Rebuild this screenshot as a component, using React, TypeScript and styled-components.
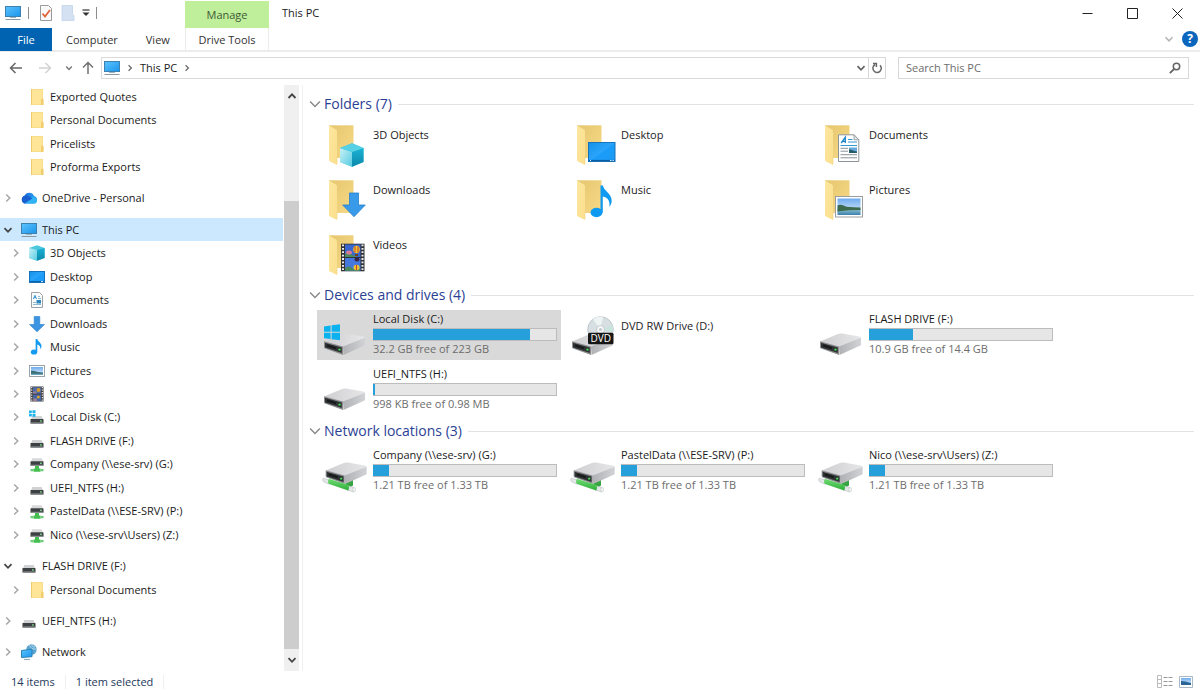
import React from "react";
import styled, { createGlobalStyle } from "styled-components";

const GlobalStyle = createGlobalStyle`
  * { box-sizing: border-box; }
  body {
    margin: 0;
    background: #fff;
    color: #1b1b1b;
    font-family: "Open Sans", "Noto Sans", sans-serif;
    font-size: 11px;
    line-height: 16px;
  }
  button { font: inherit; color: inherit; background: none; border: 0; padding: 0; }
  svg { display: block; flex: none; }
`;

/* ---------- Icons ---------- */

type Dir = "up" | "down" | "right";

const Chevron = ({ dir, color = "#555", size = 10, stroke = 1.5 }: { dir: Dir; color?: string; size?: number; stroke?: number }) => {
  const d = { up: "M1.5 7 5 3.4 8.5 7", down: "M1.5 3.2 5 6.8 8.5 3.2", right: "M3.2 1.5 6.8 5 3.2 8.5" }[dir];
  return (
    <svg width={size} height={size} viewBox="0 0 10 10" fill="none" stroke={color} strokeWidth={stroke}>
      <path d={d} />
    </svg>
  );
};

const HiddenDefs = styled.svg`
  position: absolute;
`;

const Gradients = () => (
  <HiddenDefs width="0" height="0" aria-hidden="true">
    <defs>
      <linearGradient id="screen" x1="0" y1="0" x2="1" y2="1">
        <stop offset="0" stopColor="#5cc3ff" /><stop offset="1" stopColor="#1b95ea" />
      </linearGradient>
      <linearGradient id="desk" x1="0" y1="0" x2="1" y2="1">
        <stop offset="0" stopColor="#1591ea" /><stop offset="0.5" stopColor="#2ba5fb" /><stop offset="0.52" stopColor="#1a9cf8" /><stop offset="1" stopColor="#1c9bf6" />
      </linearGradient>
      <linearGradient id="flap" x1="0" y1="0" x2="1" y2="1">
        <stop offset="0" stopColor="#fde79f" /><stop offset="1" stopColor="#fbdf8d" />
      </linearGradient>
      <linearGradient id="back" x1="0" y1="0" x2="1" y2="1">
        <stop offset="0" stopColor="#e6c66e" /><stop offset="1" stopColor="#f7d987" />
      </linearGradient>
      <linearGradient id="driveTop" x1="0" y1="0" x2="1" y2="0">
        <stop offset="0" stopColor="#cfcfd1" /><stop offset="1" stopColor="#e6e6e8" />
      </linearGradient>
      <linearGradient id="driveSide" x1="0" y1="0" x2="1" y2="0">
        <stop offset="0" stopColor="#b0b1b4" /><stop offset="1" stopColor="#d2d3d6" />
      </linearGradient>
      <linearGradient id="tube" x1="0" y1="0" x2="0" y2="1">
        <stop offset="0" stopColor="#6fdc72" /><stop offset="1" stopColor="#2fae3b" />
      </linearGradient>
      <linearGradient id="cubeL" x1="0" y1="0" x2="1" y2="1">
        <stop offset="0" stopColor="#c9f1f8" /><stop offset="1" stopColor="#55cbe0" />
      </linearGradient>
      <linearGradient id="cubeR" x1="0" y1="0" x2="0" y2="1">
        <stop offset="0" stopColor="#1bb2d3" /><stop offset="1" stopColor="#0b88ab" />
      </linearGradient>
      <linearGradient id="cloud" x1="0" y1="0" x2="1" y2="0">
        <stop offset="0" stopColor="#1b62d6" /><stop offset="1" stopColor="#2aa6f2" />
      </linearGradient>
      <linearGradient id="sky" x1="0" y1="0" x2="0" y2="1">
        <stop offset="0" stopColor="#6fabee" /><stop offset="1" stopColor="#e8f4fb" />
      </linearGradient>
      <linearGradient id="water" x1="0" y1="0" x2="0" y2="1">
        <stop offset="0" stopColor="#8fc3cf" /><stop offset="1" stopColor="#3c7fae" />
      </linearGradient>
    </defs>
  </HiddenDefs>
);

const Small = ({ children }: { children: React.ReactNode }) => (
  <svg width="16" height="16" viewBox="0 0 16 16">{children}</svg>
);

const drivePlate = (
  <>
    <path d="M3.4 7h9.2L14 10.300H2z" fill="#cfd1d3" />
    <rect x="1.5" y="9.900" width="13" height="4.6" rx=".6" fill="#3c4043" />
    <rect x="1.5" y="13.300" width="13" height="1.2" rx=".4" fill="#7b7f82" />
    <rect x="11" y="11.300" width="1.8" height="1.3" fill="#7de18b" />
  </>
);

const smallIcons = {
  pc: (
    <Small>
      <rect x=".5" y="1.5" width="15" height="10" fill="url(#screen)" stroke="#3f81ae" />
      <path d="M5 12.5h6" stroke="#9db4c4" />
      <path d="M.5 14.5h15" stroke="#8d9aa3" />
    </Small>
  ),
  folder: (
    <Small>
      <path d="M2 0h12v9.500l.7 1V16H2z" fill="#f5d67a" />
      <path d="M2.500.500h11v15h-11z" fill="#ffe598" />
      <path d="M2.500 0v16" stroke="#ecca6d" />
      <path d="M12 10.500l.8-1h1.200v6.500h-2z" fill="#efcd70" />
    </Small>
  ),
  cloud: (
    <Small>
      <path d="M4.200 13.500a4 4 0 0 1-.7-7.700A5.200 5.200 0 0 1 13 6a3.800 3.800 0 0 1-.5 7.500z" fill="url(#cloud)" />
      <path d="M3.500 13.400 11 7.300a3.900 3.900 0 0 1 5 3.400 2.900 2.900 0 0 1-3 2.800H4.200z" fill="#2fb3f5" />
      <path d="M3.500 5.800a4.700 4.700 0 0 1 4.700.7l3 2-7.700 4.900A4 4 0 0 1 3.500 5.800z" fill="#1a5fd0" />
    </Small>
  ),
  cube: (
    <Small>
      <path d="M0 3 8 .3 15.600 3v10L8 15.800 0 13z" fill="#4cc7de" />
      <path d="M0 3 8 5v10.800L0 13z" fill="url(#cubeL)" />
      <path d="M15.600 3 8 5v10.800l7.600-2.800z" fill="url(#cubeR)" />
    </Small>
  ),
  desktop: (
    <Small>
      <rect x=".5" y="2.500" width="15" height="11" fill="url(#desk)" stroke="#1672bb" />
      <path d="M1 12.600h14" stroke="#0d5fa5" />
      <path d="M12 12.600h2" stroke="#d5ecfb" />
    </Small>
  ),
  document: (
    <Small>
      <path d="M2.500.500h8l3 3v12h-11z" fill="#fbfcfd" stroke="#9aa2a8" />
      <path d="M4.300 7 6 3.300 7.600 7M5 5.700h2" stroke="#3d9bd2" fill="none" />
      <path d="M9 4.500h2M9 6.500h3M4 12.500h8M4 10.500h3" stroke="#8fb8d0" />
      <rect x="7.500" y="8" width="4.500" height="3.500" fill="#2d87bd" />
    </Small>
  ),
  download: (
    <Small>
      <path d="M5.200.500h5.600v8H15.500L8 15.800.500 8.500h4.700z" fill="#3a94e2" stroke="#2a7fcb" strokeWidth=".6" />
    </Small>
  ),
  music: (
    <Small>
      <ellipse cx="5" cy="13" rx="3.200" ry="2.600" fill="#149af0" />
      <path d="M6.600 0h1.700c.3 2.600 4.600 3.700 4.200 7.600-.1 1-.6 2.200-1.200 2.800.5-2.700-.8-4.400-3-5v7.800H6.600z" fill="#149af0" />
    </Small>
  ),
  picture: (
    <Small>
      <rect x=".5" y="2.500" width="15" height="11" fill="#fff" stroke="#9aa3aa" />
      <rect x="2" y="4" width="12" height="8" fill="url(#sky)" />
      <path d="M2 7.500c3 .3 5 1.300 12 2V12H2z" fill="#3c7078" />
      <path d="M2 10.800h12V12H2z" fill="#6ca6c0" />
    </Small>
  ),
  video: (
    <Small>
      <rect x="1.500" y=".5" width="13" height="15" fill="#3d3d3d" />
      <rect x="4" y="1.200" width="8" height="6.400" fill="#4f6ca8" />
      <rect x="4" y="8.600" width="8" height="6.400" fill="#4665a6" />
      <path d="M4 5.500h3.500v2H4zM4 12.500h4V15H4z" fill="#9a7f90" />
      <circle cx="9.500" cy="4" r="1.900" fill="#d89b2a" />
      <circle cx="9.300" cy="11" r="1.500" fill="#d8a52a" />
      <path d="M2.700 1v14M13.300 1v14" stroke="#e9e9e9" strokeWidth="1.200" strokeDasharray="1.300 1.200" />
    </Small>
  ),
  drive: <Small>{drivePlate}</Small>,
  winDrive: (
    <Small>
      {drivePlate}
      <path d="M0 1.500h2.800v2.600H0zM3.500 1.300h3v2.800h-3zM0 4.800h2.800V7.500H0zM3.500 4.800h3v2.900h-3z" fill="#1cb2ee" />
    </Small>
  ),
  netDrive: (
    <Small>
      <path d="M3.400 2.200h9.200L14 5.500H2z" fill="#d6d8da" />
      <rect x="1.500" y="5.200" width="13" height="4.600" rx=".6" fill="#3c4043" />
      <rect x="1.500" y="8.700" width="13" height="1.200" rx=".4" fill="#8b8f92" />
      <rect x="11" y="6.600" width="1.800" height="1.300" fill="#7de18b" />
      <path d="M6 9.900h4v2.600h1.500v3.200h-7v-3.200H6z" fill="#45bf52" />
      <path d="M1.500 13h3v2.200h-3zM11.500 13h3v2.200h-3z" fill="#6ccb76" />
    </Small>
  ),
  network: (
    <Small>
      <circle cx="10.500" cy="5.500" r="5.200" fill="#5aa3cf" />
      <path d="M8 1.500c2 .5 1.500 2 3 3s3 0 4.500 1M11 .5c-.5 2 1.500 2.500 3 2.500" stroke="#b9dff1" fill="none" />
      <path d="M.5 6.500 11 5.200v7.500L.5 13.500z" fill="url(#screen)" stroke="#2c81b5" />
      <path d="M3 15.400h6" stroke="#8aa2b0" />
    </Small>
  ),
};

type SmallName = keyof typeof smallIcons;

const Large = ({ children }: { children: React.ReactNode }) => (
  <svg width="48" height="48" viewBox="0 0 48 48">{children}</svg>
);

const folderBase = (
  <>
    <path d="M8 5.300h24.500V38H8z" fill="url(#back)" />
    <path d="M8 5.500 15 9.500q1 .6 1 2V45L9 41.500Q8 41 8 40z" fill="url(#flap)" />
    <path d="M16 36.500v7.500" stroke="#f0d68a" strokeWidth=".7" />
  </>
);

const driveBody = (
  <>
    <path d="M3 30.500 21 23q2-.8 4-.4l17 3q2 .4 2 1.500L22 36z" fill="url(#driveTop)" />
    <path d="M22 35.500 44 26.800v7.400L22.500 44z" fill="url(#driveSide)" />
    <path d="M3 30.200 22 35.400V44L4 37.500Q3 37 3 36z" fill="#8c8e90" />
    <path d="M4 31.700 20.800 36.400V42L4 36.500z" fill="#2f3234" />
    <path d="M6 33.600 15 36.200v2L6 35.600z" fill="#17191a" />
    <circle cx="18.500" cy="38.600" r="1.200" fill="#3fd04f" />
  </>
);

const largeIcons = {
  cube: (
    <Large>
      {folderBase}
      <path d="M19 28 31 23.300 42.500 28v14L31 46.700 19 42z" fill="#3fc3dc" />
      <path d="M19 28 31 32v14.700L19 42z" fill="url(#cubeL)" />
      <path d="M42.500 28 31 32v14.700L42.500 42z" fill="url(#cubeR)" />
      <path d="M19 28 31 23.300 42.500 28 31 32z" fill="#56d0e4" />
    </Large>
  ),
  desktop: (
    <Large>
      {folderBase}
      <rect x="19.500" y="22.500" width="26.500" height="19" fill="url(#desk)" stroke="#1873b8" />
      <path d="M20 40.500h26" stroke="#0c5ca3" strokeWidth="1.200" />
      <path d="M41 40.500h4M21 40.500h1" stroke="#d9effd" strokeDasharray="1 .6" />
    </Large>
  ),
  document: (
    <Large>
      {folderBase}
      <path d="M21.500 14.800H37l4.800 5V41.500H21.500z" fill="#fff" stroke="#8d9499" />
      <path d="M37 14.800v5h4.800z" fill="#e2e6e9" stroke="#8d9499" strokeWidth=".8" />
      <path d="M24.200 23 28.300 17.200V23M25.500 21.300h3" fill="none" stroke="#1b83c9" strokeWidth="1.300" />
      <path d="M31 19.500h4.500M31 22h9M23.500 25.500H40" stroke="#3399d3" strokeWidth="1.100" />
      <path d="M23.500 28.300h7.500M23.500 31.200h7.500M23.500 34.700H40M23.500 37.800H40" stroke="#8a9299" />
      <rect x="32" y="27.500" width="8" height="5.500" fill="#66a9dc" />
      <path d="M32 29.500c3 0 4 1.500 8 2V33h-8z" fill="#285a6a" />
    </Large>
  ),
  download: (
    <Large>
      {folderBase}
      <path d="M28.500 18h9v12h6.800L33 41.700 21.700 30h6.800z" fill="#3a9aea" stroke="#2581cc" strokeWidth=".8" />
    </Large>
  ),
  music: (
    <Large>
      {folderBase}
      <ellipse cx="27.500" cy="37.500" rx="6" ry="4.700" fill="#0f9af2" />
      <path d="M31.500 10.500H34c.6 5.500 9 8 8.700 15.500-.1 2.300-1.200 4.500-2.400 6 1-5.500-1.200-9.500-6.500-10.500V37.500h-2.300z" fill="#0f9af2" />
    </Large>
  ),
  picture: (
    <Large>
      {folderBase}
      <rect x="18.500" y="21.500" width="27" height="20.500" fill="#fff" stroke="#9a9da0" />
      <rect x="20.500" y="23.500" width="23" height="16.500" fill="url(#sky)" />
      <rect x="20.500" y="34" width="23" height="6" fill="url(#water)" />
      <path d="M20.500 30.500q3-1.500 6 0t6 1.500 11 .5V35l-12 .3-11 1.200z" fill="#3d6a4c" />
    </Large>
  ),
  video: (
    <Large>
      {folderBase}
      <rect x="20" y="13.700" width="23.500" height="27.600" fill="#303236" />
      <rect x="24" y="14.500" width="15.500" height="12.500" fill="#3a66cf" />
      <rect x="24" y="28" width="15.500" height="12.800" fill="#4478dd" />
      <path d="M24 24q3-3 6 0t5 1v2H24zM24 38q4-3 7 0t8 0v2.800H24z" fill="#4a8a5c" />
      <ellipse cx="28" cy="22.500" rx="3" ry="2" fill="#d77c92" />
      <ellipse cx="35.500" cy="19.500" rx="3.300" ry="3.700" fill="#efc52e" />
      <path d="M34 16.500v6M37 16.500v6" stroke="#c93a2e" />
      <path d="M34 24h3v2h-3z" fill="#6b4320" />
      <ellipse cx="36" cy="29.500" rx="2.500" ry="2" fill="#3a2440" />
      <ellipse cx="35.500" cy="37.500" rx="3" ry="2.700" fill="#efc52e" />
      <path d="M35.500 35v5" stroke="#c93a2e" />
      <path d="M22 14.500v26M41.500 14.500v26" stroke="#eee" strokeWidth="2" strokeDasharray="1.800 1.600" />
    </Large>
  ),
  drive: <Large>{driveBody}</Large>,
  winDrive: (
    <Large>
      {driveBody}
      <path d="M3 15.500 9.600 14.500V20.800H3zM10.600 14.300 19 13.200V20.800H10.600zM3 21.800H9.600V28L3 27.200zM10.600 21.800H19V29.300L10.600 28.200z" fill="#0cb2f0" />
    </Large>
  ),
  dvd: (
    <Large>
      {driveBody}
      <circle cx="31.500" cy="18.500" r="12.800" fill="#d7dfe2" stroke="#b4bdc1" strokeWidth=".8" />
      <path d="M31.500 18.500 24 8.200A12.800 12.800 0 0 1 34 6z" fill="#eef4f4" />
      <path d="M31.500 18.500 43.500 14a12.800 12.800 0 0 1 .4 7z" fill="#c8e4dc" />
      <circle cx="31.500" cy="18.500" r="4" fill="#f5f7f8" stroke="#b2babd" strokeWidth=".7" />
      <circle cx="31.500" cy="18.500" r="1.600" fill="#c2cacd" />
      <rect x="19" y="21.700" width="25.500" height="11.500" rx="1.500" fill="#161616" />
      <text x="31.700" y="31" textAnchor="middle" fontSize="10" fontFamily="Open Sans, sans-serif" fill="#fff">DVD</text>
    </Large>
  ),
  netDrive: (
    <Large>
      <path d="M24 36 32 32.500v6l-5 3z" fill="#35a541" />
      <g transform="translate(1.700 -7)">{driveBody}</g>
      <path d="M2.300 31.200 8 33v4.200l-5.500-2.500q-1.600-1.700-.2-3.500z" fill="#e3e7e8" stroke="#b6bcbe" strokeWidth=".6" />
      <path d="M26 38.500 33 40.500q1.800 2 0 4.500L26 43z" fill="#e3e7e8" stroke="#b6bcbe" strokeWidth=".6" />
      <path d="M8 31.700 27.500 38q1.300 2.500-.3 5.500L8 37q-1.800-2.500 0-5.300z" fill="url(#tube)" />
      <ellipse cx="33.200" cy="42.700" rx="1.300" ry="2.200" fill="#f7f8f8" stroke="#b6bcbe" strokeWidth=".5" />
    </Large>
  ),
};

type LargeName = keyof typeof largeIcons;

/* ---------- Data ---------- */

interface NavItem {
  label: string;
  icon: SmallName;
  level: 1 | 2;
  arrow?: "right" | "down";
  selected?: boolean;
}

const navGroups: NavItem[][] = [
  [
    { label: "Exported Quotes", icon: "folder", level: 2 },
    { label: "Personal Documents", icon: "folder", level: 2 },
    { label: "Pricelists", icon: "folder", level: 2 },
    { label: "Proforma Exports", icon: "folder", level: 2 },
  ],
  [{ label: "OneDrive - Personal", icon: "cloud", level: 1, arrow: "right" }],
  [
    { label: "This PC", icon: "pc", level: 1, arrow: "down", selected: true },
    { label: "3D Objects", icon: "cube", level: 2, arrow: "right" },
    { label: "Desktop", icon: "desktop", level: 2, arrow: "right" },
    { label: "Documents", icon: "document", level: 2, arrow: "right" },
    { label: "Downloads", icon: "download", level: 2, arrow: "right" },
    { label: "Music", icon: "music", level: 2, arrow: "right" },
    { label: "Pictures", icon: "picture", level: 2, arrow: "right" },
    { label: "Videos", icon: "video", level: 2, arrow: "right" },
    { label: "Local Disk (C:)", icon: "winDrive", level: 2, arrow: "right" },
    { label: "FLASH DRIVE (F:)", icon: "drive", level: 2, arrow: "right" },
    { label: "Company (\\\\ese-srv) (G:)", icon: "netDrive", level: 2, arrow: "right" },
    { label: "UEFI_NTFS (H:)", icon: "drive", level: 2, arrow: "right" },
    { label: "PastelData (\\\\ESE-SRV) (P:)", icon: "netDrive", level: 2, arrow: "right" },
    { label: "Nico (\\\\ese-srv\\Users) (Z:)", icon: "netDrive", level: 2, arrow: "right" },
  ],
  [
    { label: "FLASH DRIVE (F:)", icon: "drive", level: 1, arrow: "down" },
    { label: "Personal Documents", icon: "folder", level: 2, arrow: "right" },
  ],
  [{ label: "UEFI_NTFS (H:)", icon: "drive", level: 1, arrow: "right" }],
  [{ label: "Network", icon: "network", level: 1, arrow: "right" }],
];

interface TileItem {
  name: string;
  icon: LargeName;
  used?: number;
  free?: string;
  selected?: boolean;
}

const sections: { title: string; items: TileItem[] }[] = [
  {
    title: "Folders (7)",
    items: [
      { name: "3D Objects", icon: "cube" },
      { name: "Desktop", icon: "desktop" },
      { name: "Documents", icon: "document" },
      { name: "Downloads", icon: "download" },
      { name: "Music", icon: "music" },
      { name: "Pictures", icon: "picture" },
      { name: "Videos", icon: "video" },
    ],
  },
  {
    title: "Devices and drives (4)",
    items: [
      { name: "Local Disk (C:)", icon: "winDrive", used: 86, free: "32.2 GB free of 223 GB", selected: true },
      { name: "DVD RW Drive (D:)", icon: "dvd" },
      { name: "FLASH DRIVE (F:)", icon: "drive", used: 24, free: "10.9 GB free of 14.4 GB" },
      { name: "UEFI_NTFS (H:)", icon: "drive", used: 1, free: "998 KB free of 0.98 MB" },
    ],
  },
  {
    title: "Network locations (3)",
    items: [
      { name: "Company (\\\\ese-srv) (G:)", icon: "netDrive", used: 9, free: "1.21 TB free of 1.33 TB" },
      { name: "PastelData (\\\\ESE-SRV) (P:)", icon: "netDrive", used: 9, free: "1.21 TB free of 1.33 TB" },
      { name: "Nico (\\\\ese-srv\\Users) (Z:)", icon: "netDrive", used: 9, free: "1.21 TB free of 1.33 TB" },
    ],
  },
];

/* ---------- Layout ---------- */

const Window = styled.div`
  display: flex;
  flex-direction: column;
  min-height: 100vh;
`;

const Header = styled.header`
  display: flex;
  align-items: flex-start;
  height: 52px;
  border-bottom: 2px solid #ececec;
`;

const TabArea = styled.div`
  display: flex;
  flex-direction: column;
  width: 185px;
`;

const QuickBar = styled.div`
  display: flex;
  align-items: center;
  height: 28px;
  padding: 0 0 2px 5px;
  gap: 7px;
`;

const QuickButtons = styled.div`
  display: flex;
  align-items: center;
  gap: 6px;
  padding-left: 2px;
`;

const QuickButton = styled.button`
  display: flex;
`;

const Divider = styled.span<{ $h: number; $c?: string }>`
  width: 1px;
  height: ${(p) => p.$h}px;
  background: ${(p) => p.$c ?? "#8c8c8c"};
`;

const Tabs = styled.div`
  display: flex;
  height: 23px;
`;

const Tab = styled.button<{ $file?: boolean }>`
  min-width: 52px;
  padding: 0 14px;
  background: ${(p) => (p.$file ? "#0063b1" : "transparent")};
  color: ${(p) => (p.$file ? "#fff" : "#333")};
`;

const ContextGroup = styled.div`
  width: 84px;
  margin-top: 1px;
  text-align: center;
`;

const ContextTitle = styled.div`
  height: 27px;
  background: #c0ef9c;
  color: #3d5a33;
  line-height: 28px;
`;

const ContextTab = styled.button`
  display: block;
  width: 100%;
  height: 22px;
  padding-top: 2px;
  border-left: 1px solid #ececec;
  border-right: 1px solid #ececec;
  color: #333;
`;

const Title = styled.h1`
  flex: 1;
  margin: 0;
  padding: 5px 13px;
  font-size: 11px;
  font-weight: 400;
  line-height: 16px;
`;

const WindowSide = styled.div`
  display: flex;
  flex-direction: column;
  align-items: flex-end;
`;

const WindowButtons = styled.div`
  display: flex;
  height: 26px;
`;

const WindowButton = styled.button`
  display: flex;
  align-items: center;
  justify-content: center;
  width: 45px;
`;

const RibbonTools = styled.div`
  display: flex;
  align-items: center;
  gap: 8px;
  height: 26px;
  padding-right: 2px;
`;

const HelpButton = styled.button`
  width: 16px;
  height: 16px;
  border-radius: 50%;
  background: #0b66bd;
  color: #fff;
  font-size: 12px;
  font-weight: 700;
  line-height: 16px;
`;

const AddressRow = styled.div`
  display: flex;
  align-items: center;
  height: 33px;
  padding: 0 11px 2px 9px;
`;

const NavButtons = styled.div`
  display: grid;
  grid-template-columns: 29px 27px 16px 20px;
  align-items: center;
`;

const NavButton = styled.button`
  display: flex;
`;

const AddressBox = styled.div`
  display: flex;
  flex: 1;
  align-items: center;
  gap: 6px;
  height: 22px;
  padding-left: 2px;
  border: 1px solid #d9d9d9;
`;

const Crumb = styled.button``;

const AddressTools = styled.div`
  display: flex;
  align-items: center;
  height: 20px;
  margin-left: auto;
`;

const RefreshButton = styled.button`
  display: flex;
  align-items: center;
  justify-content: center;
  width: 17px;
  height: 20px;
  margin-left: 2px;
  border-left: 1px solid #d9d9d9;
`;

const SearchBox = styled.label`
  display: flex;
  align-items: center;
  width: calc(25% - 4px);
  height: 22px;
  margin-left: 12px;
  padding: 0 7px;
  border: 1px solid #d9d9d9;
`;

const SearchInput = styled.input`
  flex: 1;
  min-width: 0;
  padding: 0;
  border: 0;
  outline: 0;
  background: none;
  font: inherit;
  &::placeholder { color: #6d6d6d; opacity: 1; }
`;

const Body = styled.div`
  display: flex;
  flex: 1;
`;

const Sidebar = styled.aside`
  display: flex;
  width: 303px;
  padding-right: 3px;
  border-right: 1px solid #f0f0f0;
`;

const Tree = styled.nav`
  display: flex;
  flex: 1;
  flex-direction: column;
  padding-bottom: 7px;
`;

const TreeGap = styled.div`
  flex: 1 0 0;
`;

const TreeRow = styled.button<{ $level: number; $selected?: boolean }>`
  display: flex;
  flex: 3 0 0;
  align-items: center;
  min-height: 20px;
  padding-left: ${(p) => (p.$level === 1 ? 3 : 11)}px;
  background: ${(p) => (p.$selected ? "#cce8ff" : "transparent")};
  white-space: nowrap;
`;

const TreeArrow = styled.span`
  width: 10px;
  margin-right: 8px;
`;

const TreeLabel = styled.span`
  margin-left: 5px;
`;

const ScrollBar = styled.div`
  display: flex;
  flex-direction: column;
  width: 15px;
  margin-left: 1px;
  background: #f0f0f0;
`;

const ScrollButton = styled.button`
  display: flex;
  align-items: center;
  justify-content: center;
  height: 22px;
`;

const ScrollSpace = styled.div`
  flex: 94;
`;

const ScrollThumb = styled.div`
  flex: 447;
  background: #cdcdcd;
`;

const Content = styled.main`
  display: flex;
  flex: 1;
  flex-direction: column;
  gap: 3px;
  padding: 6px 6px 0 5px;
`;

const SectionHead = styled.h2`
  display: flex;
  align-items: center;
  gap: 2px;
  height: 26px;
  margin: 0 0 2px;
  color: #2b3f94;
  font-size: 14px;
  font-weight: 400;
  line-height: 24px;
`;

const Rule = styled.span`
  flex: 1;
  height: 1px;
  margin-left: 4px;
  background: #e2e2e2;
`;

const TileGrid = styled.div`
  display: grid;
  grid-template-columns: repeat(auto-fill, 244px);
  gap: 5px 4px;
  padding-left: 9px;
`;

const Tile = styled.button<{ $selected?: boolean }>`
  display: flex;
  height: 50px;
  gap: 4px;
  padding: 1px 4px;
  background: ${(p) => (p.$selected ? "#d9d9d9" : "transparent")};
  text-align: left;
`;

const TileText = styled.span<{ $plain: boolean }>`
  display: flex;
  flex: 1;
  flex-direction: column;
  padding-top: ${(p) => (p.$plain ? 7 : 0)}px;
`;

const Meter = styled.span`
  display: flex;
  height: 13px;
  margin-top: 1px;
  border: 1px solid #bcbcbc;
  border-left: 0;
  background: #e6e6e6;
`;

const MeterFill = styled.span`
  background: #26a0da;
`;

const FreeText = styled.span`
  color: #6d6d6d;
`;

const StatusBar = styled.footer`
  display: flex;
  align-items: center;
  gap: 10px;
  height: 19px;
  padding: 3px 7px 0 11px;
  color: #1e395b;
`;

const ViewButtons = styled.div`
  display: flex;
  gap: 6px;
  margin-left: auto;
`;

/* ---------- App ---------- */

const Arrow = ({ color, rotate = 0 }: { color: string; rotate?: number }) => (
  <svg width="14" height="14" viewBox="0 0 14 14" fill="none" stroke={color} strokeWidth="1.500">
    <path d="M13 7H2M6.500 2 1.500 7l5 5" transform={`rotate(${rotate} 7 7)`} />
  </svg>
);

export default function App() {
  return (
    <Window>
      <GlobalStyle />
      <Gradients />
      <Header>
        <TabArea>
          <QuickBar>
            {smallIcons.pc}
            <Divider $h={12} />
            <QuickButtons>
              <QuickButton aria-label="Properties">
                <svg width="16" height="16" viewBox="0 0 16 16">
                  <path d="M2.500.500h8l3 3v12h-11z" fill="#fafafa" stroke="#9a9a9a" />
                  <path d="m4.500 8.500 2.500 3 5-6.500" fill="none" stroke="#e2653a" strokeWidth="1.800" />
                </svg>
              </QuickButton>
              <QuickButton aria-label="New folder">
                <svg width="16" height="16" viewBox="0 0 16 16">
                  <path d="M2 .500h10.500v9l1.500 1v5H2z" fill="#d3e1f3" stroke="#c3d3e8" strokeWidth=".8" />
                </svg>
              </QuickButton>
              <QuickButton aria-label="Customize toolbar">
                <svg width="8" height="8" viewBox="0 0 8 8">
                  <path d="M.5 1h7" stroke="#333" strokeWidth="1.200" />
                  <path d="M.5 3.500h7L4 7z" fill="#333" />
                </svg>
              </QuickButton>
              <Divider $h={12} />
            </QuickButtons>
          </QuickBar>
          <Tabs>
            <Tab $file>File</Tab>
            <Tab>Computer</Tab>
            <Tab>View</Tab>
          </Tabs>
        </TabArea>
        <ContextGroup>
          <ContextTitle>Manage</ContextTitle>
          <ContextTab>Drive Tools</ContextTab>
        </ContextGroup>
        <Title>This PC</Title>
        <WindowSide>
          <WindowButtons>
            <WindowButton aria-label="Minimize">
              <svg width="11" height="11" viewBox="0 0 11 11" stroke="#222"><path d="M.5 5.500h10" /></svg>
            </WindowButton>
            <WindowButton aria-label="Maximize">
              <svg width="11" height="11" viewBox="0 0 11 11" fill="none" stroke="#222"><path d="M.5.500h10v10H.5z" /></svg>
            </WindowButton>
            <WindowButton aria-label="Close">
              <svg width="11" height="11" viewBox="0 0 11 11" stroke="#222"><path d="m.5.500 10 10m0-10-10 10" /></svg>
            </WindowButton>
          </WindowButtons>
          <RibbonTools>
            <Chevron dir="down" color="#b5b5b5" />
            <HelpButton aria-label="Help">?</HelpButton>
          </RibbonTools>
        </WindowSide>
      </Header>

      <AddressRow>
        <NavButtons>
          <NavButton aria-label="Back"><Arrow color="#666" /></NavButton>
          <NavButton aria-label="Forward"><Arrow color="#d2d2d2" rotate={180} /></NavButton>
          <NavButton aria-label="Recent locations"><Chevron dir="down" color="#777" size={8} stroke={1.8} /></NavButton>
          <NavButton aria-label="Up"><Arrow color="#707070" rotate={90} /></NavButton>
        </NavButtons>
        <AddressBox>
          {smallIcons.pc}
          <Chevron dir="right" color="#666" size={8} />
          <Crumb>This PC</Crumb>
          <Chevron dir="right" color="#666" size={8} />
          <AddressTools>
            <Chevron dir="down" color="#666" stroke={1.8} />
            <RefreshButton aria-label="Refresh">
              <svg width="12" height="12" viewBox="0 0 12 12" fill="none" stroke="#666" strokeWidth="1.500">
                <path d="M9 3.200A4.200 4.200 0 1 1 4 2.600M2 1.500h3.400V5" />
              </svg>
            </RefreshButton>
          </AddressTools>
        </AddressBox>
        <SearchBox>
          <SearchInput type="text" aria-label="Search This PC" placeholder="Search This PC" />
          <svg width="12" height="12" viewBox="0 0 12 12" fill="none" stroke="#666" strokeWidth="1.500">
            <circle cx="7.500" cy="4.500" r="3.200" /><path d="M5.200 7 .8 11.200" strokeWidth="1.800" />
          </svg>
        </SearchBox>
      </AddressRow>

      <Body>
        <Sidebar>
          <Tree aria-label="Folders">
            {navGroups.map((group, g) => (
              <React.Fragment key={g}>
                {g > 0 && <TreeGap />}
                {group.map((item) => (
                  <TreeRow key={item.label} $level={item.level} $selected={item.selected}>
                    <TreeArrow>
                      {item.arrow && (
                        <Chevron dir={item.arrow} color={item.arrow === "down" ? "#444" : "#a6a6a6"} stroke={item.arrow === "down" ? 1.8 : 1.5} />
                      )}
                    </TreeArrow>
                    {smallIcons[item.icon]}
                    <TreeLabel>{item.label}</TreeLabel>
                  </TreeRow>
                ))}
              </React.Fragment>
            ))}
          </Tree>
          <ScrollBar>
            <ScrollButton aria-label="Scroll up"><Chevron dir="up" color="#444" stroke={1.8} /></ScrollButton>
            <ScrollSpace />
            <ScrollThumb />
            <ScrollButton aria-label="Scroll down"><Chevron dir="down" color="#444" stroke={1.8} /></ScrollButton>
          </ScrollBar>
        </Sidebar>

        <Content>
          {sections.map((section) => (
            <section key={section.title}>
              <SectionHead>
                <Chevron dir="down" color="#888" size={14} stroke={1} />
                {section.title}
                <Rule />
              </SectionHead>
              <TileGrid>
                {section.items.map((item) => (
                  <Tile key={item.name} $selected={item.selected}>
                    {largeIcons[item.icon]}
                    <TileText $plain={!item.free}>
                      {item.name}
                      {item.free && (
                        <>
                          <Meter><MeterFill style={{ width: `${item.used}%` }} /></Meter>
                          <FreeText>{item.free}</FreeText>
                        </>
                      )}
                    </TileText>
                  </Tile>
                ))}
              </TileGrid>
            </section>
          ))}
        </Content>
      </Body>

      <StatusBar>
        <span>14 items</span>
        <Divider $h={14} $c="#f0f0f0" />
        <span>1 item selected</span>
        <Divider $h={14} $c="#f0f0f0" />
        <ViewButtons>
          <button aria-label="Details view">
            <svg width="16" height="14" viewBox="0 0 16 14" fill="none" stroke="#999">
              <path d="M.5.500h4v12h-4zM.5 4.500h4M.5 8.500h4" stroke="#bbb" />
              <path d="M6.500 2.500h4M11.500 2.500h4M6.500 6.500h4M11.500 6.500h4M6.500 10.500h4M11.500 10.500h4" />
            </svg>
          </button>
          <button aria-label="Large icons view">
            <svg width="14" height="12" viewBox="0 0 14 12">
              <path d="M.5.500h13v11H.5z" fill="#fff" stroke="#a9b8c4" />
              <path d="M2 2h10v7H2z" fill="url(#sky)" />
              <path d="M2 5q4 0 10 2v2H2z" fill="#2b6697" />
            </svg>
          </button>
        </ViewButtons>
      </StatusBar>
    </Window>
  );
}
